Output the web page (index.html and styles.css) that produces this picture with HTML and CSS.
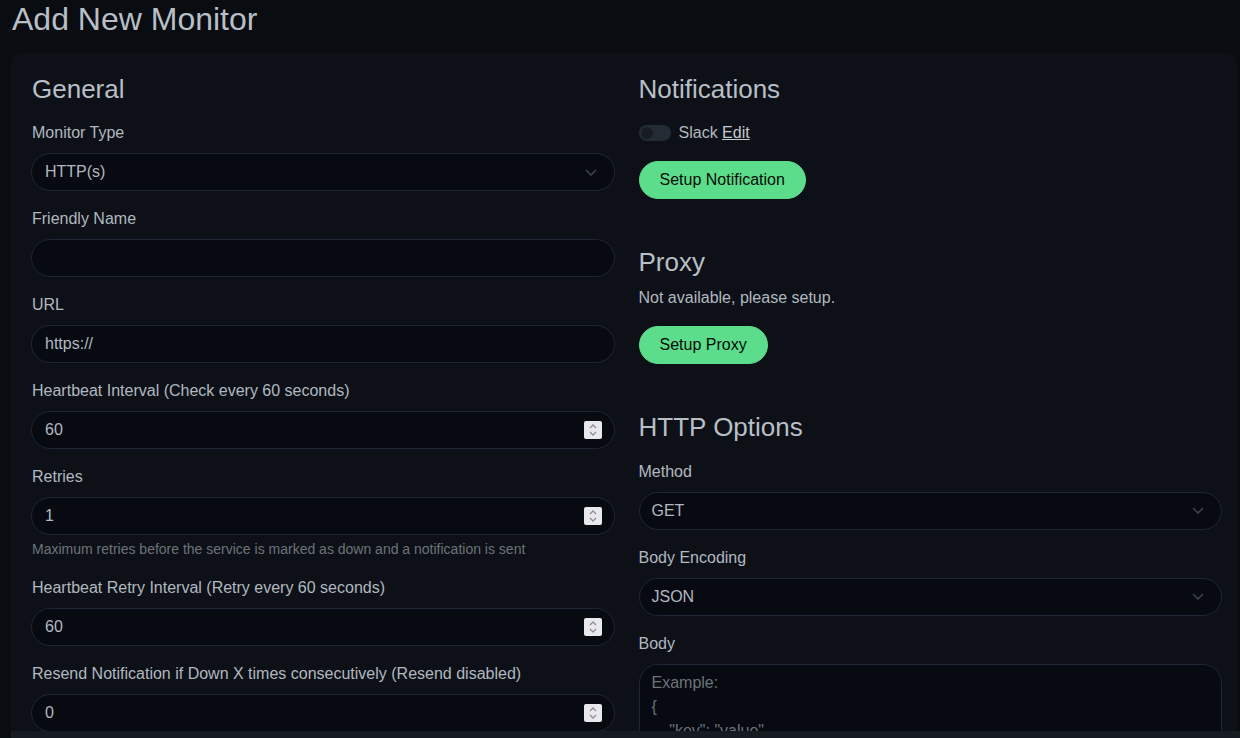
FILE: index.html
```html
<!DOCTYPE html>
<html lang="en">
<head>
<meta charset="utf-8">
<title>Add New Monitor</title>
<link rel="stylesheet" href="styles.css">
</head>
<body>
<div class="page">
  <h1 class="title">Add New Monitor</h1>
  <div class="card">
    <div class="grid">
      <div class="col col-left">
        <h2 class="section">General</h2>

        <div class="field">
          <label class="label">Monitor Type</label>
          <div class="control">
            <span class="value">HTTP(s)</span>
            <svg class="chev" width="12" height="7" viewBox="0 0 12 7"><polyline points="1,1 6,6 11,1" fill="none" stroke="currentColor" stroke-width="1.5"/></svg>
          </div>
        </div>

        <div class="field">
          <label class="label">Friendly Name</label>
          <div class="control"><span class="value"></span></div>
        </div>

        <div class="field">
          <label class="label">URL</label>
          <div class="control"><span class="value">https://</span></div>
        </div>

        <div class="field">
          <label class="label">Heartbeat Interval (Check every 60 seconds)</label>
          <div class="control">
            <span class="value">60</span>
            <span class="spin"><svg width="10" height="14" viewBox="0 0 10 14"><polyline points="2,5 5,2 8,5" fill="none" stroke="currentColor" stroke-width="1.3"/><polyline points="2,9 5,12 8,9" fill="none" stroke="currentColor" stroke-width="1.3"/></svg></span>
          </div>
        </div>

        <div class="field">
          <label class="label">Retries</label>
          <div class="control">
            <span class="value">1</span>
            <span class="spin"><svg width="10" height="14" viewBox="0 0 10 14"><polyline points="2,5 5,2 8,5" fill="none" stroke="currentColor" stroke-width="1.3"/><polyline points="2,9 5,12 8,9" fill="none" stroke="currentColor" stroke-width="1.3"/></svg></span>
          </div>
          <div class="help">Maximum retries before the service is marked as down and a notification is sent</div>
        </div>

        <div class="field">
          <label class="label">Heartbeat Retry Interval (Retry every 60 seconds)</label>
          <div class="control">
            <span class="value">60</span>
            <span class="spin"><svg width="10" height="14" viewBox="0 0 10 14"><polyline points="2,5 5,2 8,5" fill="none" stroke="currentColor" stroke-width="1.3"/><polyline points="2,9 5,12 8,9" fill="none" stroke="currentColor" stroke-width="1.3"/></svg></span>
          </div>
        </div>

        <div class="field">
          <label class="label">Resend Notification if Down X times consecutively (Resend disabled)</label>
          <div class="control">
            <span class="value">0</span>
            <span class="spin"><svg width="10" height="14" viewBox="0 0 10 14"><polyline points="2,5 5,2 8,5" fill="none" stroke="currentColor" stroke-width="1.3"/><polyline points="2,9 5,12 8,9" fill="none" stroke="currentColor" stroke-width="1.3"/></svg></span>
          </div>
        </div>
      </div>

      <div class="col col-right">
        <h2 class="section">Notifications</h2>
        <div class="check">
          <span class="switch"><span class="knob"></span></span>
          <span class="check-label">Slack <a class="edit" href="#">Edit</a></span>
        </div>
        <div class="field">
          <button class="btn" type="button">Setup Notification</button>
        </div>

        <h2 class="section spaced">Proxy</h2>
        <p class="note">Not available, please setup.</p>
        <div class="btn-row">
          <button class="btn" type="button">Setup Proxy</button>
        </div>

        <h2 class="section spaced">HTTP Options</h2>

        <div class="field">
          <label class="label">Method</label>
          <div class="control">
            <span class="value">GET</span>
            <svg class="chev" width="12" height="7" viewBox="0 0 12 7"><polyline points="1,1 6,6 11,1" fill="none" stroke="currentColor" stroke-width="1.5"/></svg>
          </div>
        </div>

        <div class="field">
          <label class="label">Body Encoding</label>
          <div class="control">
            <span class="value">JSON</span>
            <svg class="chev" width="12" height="7" viewBox="0 0 12 7"><polyline points="1,1 6,6 11,1" fill="none" stroke="currentColor" stroke-width="1.5"/></svg>
          </div>
        </div>

        <div class="field">
          <label class="label">Body</label>
          <div class="textarea"><span class="placeholder">Example:
{
    "key": "value"
}</span></div>
        </div>
      </div>
    </div>
  </div>
</div>
<div class="bottom-bar"></div>
</body>
</html>
```

FILE: styles.css
```css
* { box-sizing: border-box; }

html, body {
  margin: 0;
  padding: 0;
}

body {
  background: #090c10;
  color: #b1b8c0;
  font-family: "Liberation Sans", Arial, sans-serif;
  font-size: 16px;
  line-height: 1.5;
  overflow: hidden;
}

.page {
  padding: 0 3px 0 11px;
}

.title {
  margin: 0 0 15px 1px;
  font-size: 32px;
  font-weight: 400;
  line-height: 38px;
  color: #b8bfc6;
}

.card {
  background: #0d1117;
  border-radius: 10px;
  padding: 21px 15px 20px 20px;
  min-height: 700px;
}

.grid {
  display: grid;
  grid-template-columns: 1fr 1fr;
  column-gap: 24px;
}

.col {
  min-width: 0;
}

.section {
  margin: 0 0 8px;
  font-size: 26px;
  font-weight: 400;
  line-height: 1.2;
  color: #b8bfc6;
}

.col-left .section {
  padding-left: 1px;
}

.section.spaced {
  margin-top: 48px;
}

.field {
  margin: 16px 0;
}

.label {
  display: block;
  margin-bottom: 8px;
}

.control {
  display: flex;
  align-items: center;
  height: 38px;
  padding: 6px 12px;
  border: 1px solid #1d2634;
  border-radius: 19px;
  background: #070a10;
  color: #b1b8c0;
}

.col-left .label,
.col-left .help {
  padding-left: 1px;
}

.col-left .control {
  padding-left: 13px;
}

.value {
  flex: 1;
  white-space: nowrap;
}

.chev {
  color: #3c4451;
  margin-right: 5px;
}

.spin {
  display: flex;
  align-items: center;
  justify-content: center;
  width: 18px;
  height: 18px;
  background: #e9e9ed;
  border-radius: 2px;
  color: #8e8e94;
}

.help {
  margin-top: 4px;
  font-size: 14px;
  line-height: 21px;
  color: #6c737a;
}

.check {
  display: flex;
  align-items: center;
  margin: 16px 0;
  height: 24px;
}

.switch {
  display: flex;
  align-items: center;
  width: 32px;
  height: 16px;
  margin-right: 8px;
  padding: 0 2px;
  border-radius: 8px;
  background: #232b35;
}

.knob {
  width: 12px;
  height: 12px;
  border-radius: 50%;
  background: #171c23;
}

.edit {
  color: #c3c9cf;
  text-decoration: underline;
}

.btn {
  font-family: inherit;
  font-size: 16px;
  line-height: 24px;
  padding: 6px 20px;
  border: 1px solid #5cdd8b;
  border-radius: 19px;
  background: #5cdd8b;
  color: #020b05;
  cursor: pointer;
}

.note {
  margin: 0 0 16px;
}

.btn-row {
  margin: 0;
}

.textarea {
  height: 160px;
  padding: 6px 12px;
  border: 1px solid #1d2634;
  border-radius: 19px;
  background: #070a10;
}

.placeholder {
  white-space: pre;
  color: #6c737a;
}

.bottom-bar {
  position: fixed;
  left: 11px;
  right: 0;
  bottom: 0;
  height: 7px;
  background: #161b22;
}
```
